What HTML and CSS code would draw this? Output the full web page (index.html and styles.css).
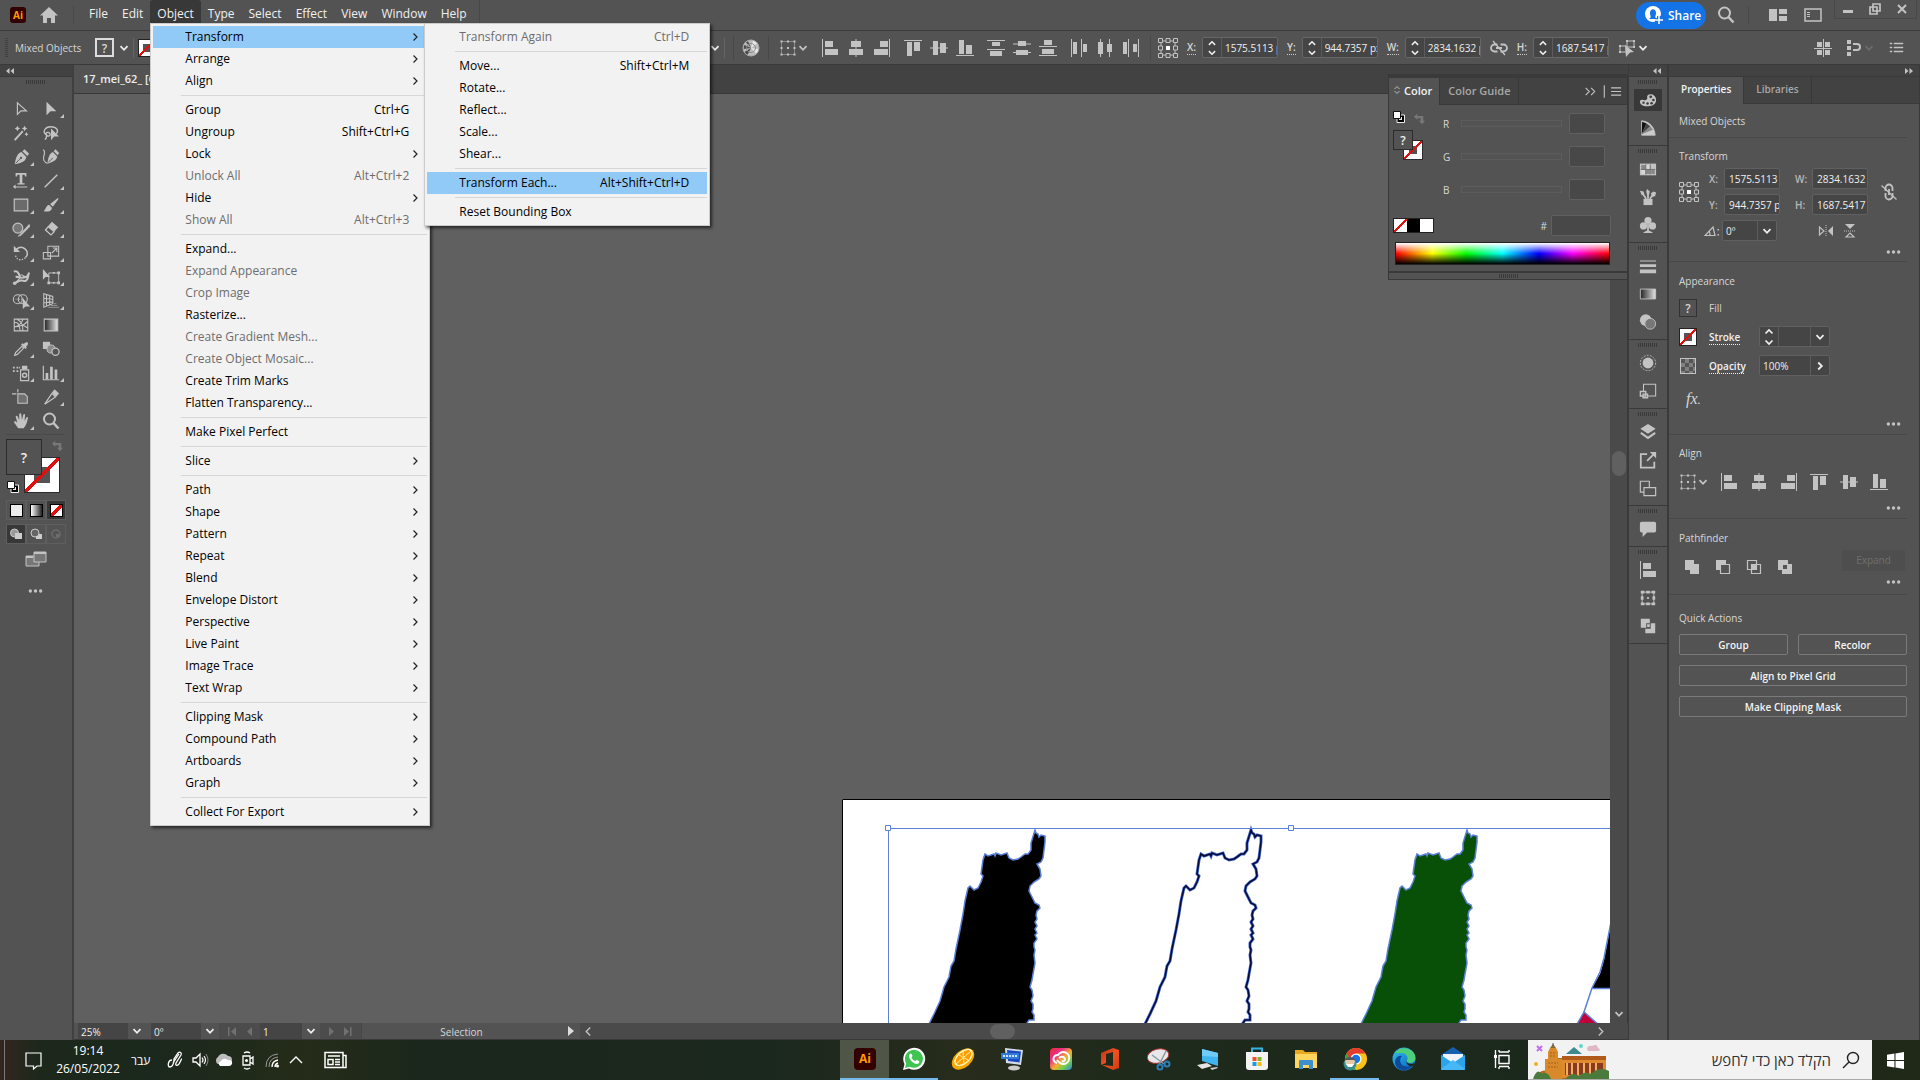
FILE: index.html
```html
<!DOCTYPE html>
<html lang="en">
<head>
    <meta charset="utf-8">
    <title>17_mei_62_</title>
    <link rel="stylesheet" href="styles.css">
</head>
<body>
    <!-- shared icons -->
    <svg class="sprite" aria-hidden="true">
        <defs>
            <linearGradient id="g-bw"><stop offset="0" stop-color="#222"/><stop offset="1" stop-color="#e6e6e6"/></linearGradient>
            <linearGradient id="g-cc" x2="1" y2="1"><stop offset="0" stop-color="#f02a2a"/><stop offset=".3" stop-color="#e8308c"/><stop offset=".55" stop-color="#f5b02e"/><stop offset=".75" stop-color="#6fd04c"/><stop offset="1" stop-color="#2f7df0"/></linearGradient>
            <linearGradient id="g-edge" x2="1" y2="1"><stop offset="0" stop-color="#39c3e0"/><stop offset=".5" stop-color="#1b8fd8"/><stop offset="1" stop-color="#1456a8"/></linearGradient>
            <linearGradient id="g-office" x2="1" y2="1"><stop offset="0" stop-color="#c2311b"/><stop offset=".5" stop-color="#f0501e"/><stop offset="1" stop-color="#d03a12"/></linearGradient>
        </defs>
        <symbol id="chev-r" viewBox="0 0 8 8"><path d="M2.5 .5 6 4 2.5 7.5" fill="none" stroke="currentColor" stroke-width="1.2"/></symbol>
        <symbol id="chev-d" viewBox="0 0 10 10"><path d="M1.5 3.2 5 6.8 8.5 3.2" fill="none" stroke="currentColor" stroke-width="1.8"/></symbol>
        <symbol id="spin" viewBox="0 0 10 18"><path d="M1.5 5.5 5 2l3.5 3.5M1.5 12.5 5 16l3.5-3.5" fill="none" stroke="currentColor" stroke-width="1.7"/></symbol>
        <symbol id="dbl-l" viewBox="0 0 10 8"><path d="M4.5 1v6L1 4zM9 1v6L5.5 4z" fill="currentColor"/></symbol>
        <symbol id="dbl-r" viewBox="0 0 10 8"><path d="M1 1v6l3.5-3zM5.5 1v6L9 4z" fill="currentColor"/></symbol>
        <symbol id="dots" viewBox="0 0 16 4"><g fill="currentColor"><circle cx="2.5" cy="2" r="1.8"/><circle cx="8" cy="2" r="1.8"/><circle cx="13.5" cy="2" r="1.8"/></g></symbol>
        <symbol id="swap" viewBox="0 0 14 14"><path d="M5 1 1 4.500 5 8V6h4v3H7l3.500 4L14 9h-2V3.500H5z" fill="#777"/></symbol>
        <symbol id="default" viewBox="0 0 12 12"><path d="M4 4h7.500v7.500H4z" fill="#000" stroke="#eee"/><path d="M6 6h3v3H6z" fill="#eee"/><path d="M.5 .5h7v7h-7z" fill="#fff" stroke="#111"/></symbol>

        <symbol id="al-l" viewBox="0 0 18 18"><path d="M1 0h1v18H1zM4 2h8v6H4zM4 10h13v6H4z" fill="currentColor"/></symbol>
        <symbol id="al-c" viewBox="0 0 18 18"><path d="M8.500 0h1v18h-1zM4 2h10v6H4zM2 10h14v6H2z" fill="currentColor"/></symbol>
        <symbol id="al-r" viewBox="0 0 18 18"><path d="M16 0h1v18h-1zM7 2h8v6H7zM1 10h14v6H1z" fill="currentColor"/></symbol>
        <symbol id="al-t" viewBox="0 0 18 18"><path d="M0 1h18v1H0zM3 3h5v14H3zM10 3h6v9h-6z" fill="currentColor"/></symbol>
        <symbol id="al-m" viewBox="0 0 18 18"><path d="M0 8.500h18v1H0zM3 2h5v14H3zM10 4h6v10h-6z" fill="currentColor"/></symbol>
        <symbol id="al-b" viewBox="0 0 18 18"><path d="M0 16h18v1H0zM3 1h5v14H3zM10 6h6v9h-6z" fill="currentColor"/></symbol>
        <symbol id="di-t" viewBox="0 0 18 18"><path d="M0 1h18v1H0zM5 3h8v4H5zM0 10h18v1H0zM3 12h12v5H3z" fill="currentColor"/></symbol>
        <symbol id="di-m" viewBox="0 0 18 18"><path d="M0 4.500h18v1H0zM5 2h8v5H5zM0 13h18v1H0zM3 11h12v5H3z" fill="currentColor"/></symbol>
        <symbol id="di-b" viewBox="0 0 18 18"><path d="M5 1h8v5H5zM0 7h18v1H0zM3 10h12v5H3zM0 16h18v1H0z" fill="currentColor"/></symbol>
        <symbol id="di-l" viewBox="0 0 18 18"><path d="M1 0h1v18H1zM3 3h4v12H3zM11 0h1v18h-1zM13 5h4v8h-4z" fill="currentColor"/></symbol>
        <symbol id="di-c" viewBox="0 0 18 18"><path d="M4 0h1v18H4zM2 3h5v12H2zM13 0h1v18h-1zM11 5h5v8h-5z" fill="currentColor"/></symbol>
        <symbol id="di-r" viewBox="0 0 18 18"><path d="M6 0h1v18H6zM1 3h4v12H1zM16 0h1v18h-1zM11 5h4v8h-4z" fill="currentColor"/></symbol>
        <symbol id="bounds" viewBox="0 0 18 18"><path d="M2.500 2.500h13v13h-13z" fill="none" stroke="currentColor" stroke-dasharray="1 1"/><path d="M1.500 1.500h2v2h-2zM8 1.500h2v2H8zM14.500 1.500h2v2h-2zM1.500 8h2v2h-2zM14.500 8h2v2h-2zM1.500 14.500h2v2h-2zM8 14.500h2v2H8zM14.500 14.500h2v2h-2zM8 8h2v2H8z" fill="currentColor"/></symbol>
        <symbol id="refpt" viewBox="0 0 20 20"><path d="M3 3h14v14H3z" fill="none" stroke="currentColor"/><g fill="#535353" stroke="currentColor"><path d="M.5 .5h4v4h-4zM8 .5h4v4H8zM15.500 .5h4v4h-4zM.5 8h4v4h-4zM15.500 8h4v4h-4zM.5 15.500h4v4h-4zM8 15.500h4v4H8zM15.500 15.500h4v4h-4z"/></g><path d="M8 8h4v4H8z" fill="#fff"/></symbol>
        <symbol id="link" viewBox="0 0 18 18"><g fill="none" stroke="currentColor" stroke-width="1.800"><path d="M7.500 5.500h-3a3.500 3.500 0 0 0 0 7h3M10.500 5.500h3a3.500 3.500 0 0 1 0 7h-3M6 9h6"/><path d="M3 2l12 14" stroke-width="1.300"/></g></symbol>
        <symbol id="link-v" viewBox="0 0 18 18"><g fill="none" stroke="currentColor" stroke-width="1.800"><path d="M5.500 8V5a3.500 3.500 0 0 1 7 0v3M5.500 10v3a3.500 3.500 0 0 0 7 0v-3M9 6v6"/><path d="M1.500 2.500l15 14" stroke-width="1.300"/></g></symbol>
        <symbol id="globe" viewBox="0 0 18 18"><circle cx="9" cy="9" r="8" fill="#bdbdbd"/><path d="M9 9 2.500 6a8 8 0 0 0-1 4zM9 9l-6.500 4a8 8 0 0 0 3 3zM9 9 6 2a8 8 0 0 0-2 1.500z" fill="#4a4a4a"/><path d="M9 9l2-7.500a8 8 0 0 1 4 3zM9 9l7.500 1a8 8 0 0 1-2 4.500z" fill="#e8e8e8"/><circle cx="9" cy="9" r="4.500" fill="none" stroke="#8a8a8a"/><circle cx="9" cy="9" r="8" fill="none" stroke="#aaa"/></symbol>
        <symbol id="lens" viewBox="0 0 18 18"><g fill="none" stroke="currentColor"><circle cx="7.500" cy="7" r="5.500" stroke-width="2"/><path d="M11.500 11l5 5.500" stroke-width="2.500"/></g></symbol>
        <symbol id="select-all" viewBox="0 0 20 20"><path d="M3 8h6v6H3zM10 3h7v6h-7z" fill="none" stroke="currentColor"/><path d="M2 7h2v2H2zM2 13h2v2H2zM9 2h2v2H9zM16 2h2v2h-2zM16 8h2v2h-2zM8 7l9 7-4 .5L9 19z" fill="currentColor"/></symbol>

        <symbol id="t-sel" viewBox="0 0 20 20"><path d="M6 3v13l4-4h6z" fill="none" stroke="currentColor" stroke-width="1.300"/></symbol>
        <symbol id="t-dir" viewBox="0 0 20 20"><path d="M5 2v15l4.500-4.500H16z" fill="currentColor"/></symbol>
        <symbol id="t-wand" viewBox="0 0 20 20"><path d="M3 18 12 8" stroke="currentColor" stroke-width="2.200"/><path d="M6 2l1 2 2 1-2 1-1 2-1-2-2-1 2-1zM14 2l1 2 2 1-2 1-1 2-1-2-2-1 2-1zM16 9l.8 1.500 1.500.8-1.500.8L16 14l-.8-2-1.500-.7 1.500-.8z" fill="currentColor"/></symbol>
        <symbol id="t-lasso" viewBox="0 0 20 20"><path d="M5 12C0 9 3 3 10 3c6 0 9 4 6 8M5 13c-2-4 3-5 4-2 .5 3-3 3-4 1zm0 0c0 3-1 4-2 4" fill="none" stroke="currentColor" stroke-width="1.500"/><path d="M10 5v13l3.500-4H19z" fill="currentColor"/></symbol>
        <symbol id="t-pen" viewBox="0 0 20 20"><path d="M11.500 3.500 17 9l2-2.500-5-5zM10.500 4.500 16 10c-1 5-5 6.500-13 8 1.500-8 3-12 7.500-13.500z" fill="currentColor"/><path d="M4 17l6-6" stroke="#535353"/><circle cx="10" cy="11" r="1.200" fill="#535353"/></symbol>
        <symbol id="t-curv" viewBox="0 0 20 20"><path d="M13 3.500 17.500 8l1.500-2.500-4-4zM12 4.500l5 5c-1 4-4 6-11 8 1-7 2-11 6-13z" fill="currentColor"/><path d="M7 16l5-5" stroke="#535353"/><path d="M1 2c3 1 2 4 1 7s0 7 4 8" fill="none" stroke="currentColor" stroke-width="1.300"/></symbol>
        <symbol id="t-type" viewBox="0 0 20 20"><path d="M4 1h12v4h-1.500l-.5-2h-2.500v9.500H14V14H6v-1.500h2.500V3H6l-.5 2H4zM2 16h15v1.300H2zM4 14v5l-3-2.500z" fill="currentColor"/></symbol>
        <symbol id="t-line" viewBox="0 0 20 20"><path d="M3 17 17 3" stroke="currentColor" stroke-width="1.600"/></symbol>
        <symbol id="t-rect" viewBox="0 0 20 20"><path d="M2.500 3.500h15v13h-15z" fill="#6b6b6b" stroke="currentColor" stroke-width="1.300"/></symbol>
        <symbol id="t-brush" viewBox="0 0 20 20"><path d="M18 2 9 9l3 3 6-8zM8 10c-3 0-3 3-6 7 4 1 9 0 9-4z" fill="currentColor"/></symbol>
        <symbol id="t-shaper" viewBox="0 0 20 20"><circle cx="6.500" cy="9" r="5.500" fill="#777" stroke="currentColor" stroke-width="1.300"/><path d="M9 16 19 5l1 2-10 10-3 1z" fill="currentColor" stroke="currentColor"/></symbol>
        <symbol id="t-eraser" viewBox="0 0 20 20"><path d="M11 2l7 6-8 9-7-6z" fill="currentColor"/><path d="M7 7.500l6.500 5.500L10 16.500 4 11z" fill="#535353" stroke="currentColor" stroke-width="1.300"/></symbol>
        <symbol id="t-rotate" viewBox="0 0 20 20"><path d="M5 6c5-5 12-1 12 5 0 2-1 3-2 4" fill="none" stroke="currentColor" stroke-width="1.700"/><path d="M4 13c1 5 7 6 11 2" fill="none" stroke="currentColor" stroke-width="1.500" stroke-dasharray="1.500 1.500"/><path d="M2 2v7h7z" fill="currentColor"/></symbol>
        <symbol id="t-scale" viewBox="0 0 20 20"><path d="M6.500 2.500h12v11h-12zM1.500 9.500h8v7h-8z" fill="none" stroke="currentColor" stroke-width="1.200"/><path d="M11 10l5-5M12 4.500h4.500V9" fill="none" stroke="currentColor" stroke-width="1.200"/></symbol>
        <symbol id="t-width" viewBox="0 0 20 20"><path d="M2 4c5-2 5 3 7 5M19 5c-1 5-4 6-7 4M4 10c4-1 6 3 14-1-1 6-4 6-7 5s-5 2-7 2" fill="none" stroke="currentColor" stroke-width="2.300"/><path d="M3 17l8-8" stroke="currentColor" stroke-width="1.200"/><circle cx="3" cy="17" r="2" fill="currentColor"/><circle cx="11" cy="9" r="1.500" fill="#535353" stroke="currentColor"/></symbol>
        <symbol id="t-free" viewBox="0 0 20 20"><path d="M7.500 5.500h11v11h-11z" fill="none" stroke="currentColor"/><path d="M1 1v12l3-3h5zM6 15h3v3H6zM17 15h3v3h-3zM17 4h3v3h-3zM12 15.500h2v2h-2zM12 4.500h2v2h-2z" fill="currentColor"/></symbol>
        <symbol id="t-build" viewBox="0 0 20 20"><circle cx="6.500" cy="8" r="5" fill="none" stroke="currentColor" stroke-width="1.200"/><circle cx="12" cy="8" r="5" fill="none" stroke="currentColor" stroke-width="1.200"/><path d="M4 8h10" stroke="currentColor" stroke-dasharray="1 1"/><path d="M12 7v12l3-3h5z" fill="currentColor"/></symbol>
        <symbol id="t-persp" viewBox="0 0 20 20"><path d="M2 2v15l10-4V5zM5 3v13M8.500 4v10.500M2 7l10 1M2 12l10-1" fill="none" stroke="currentColor" stroke-width="1.200"/><path d="M7 17h12M10 15h7M13 13h3" stroke="#999"/></symbol>
        <symbol id="t-mesh" viewBox="0 0 20 20"><path d="M2.500 3.500h15v13h-15zM3 7c5 0 5 4 6 9M3 12c5-1 10 0 14-6M6 4c6 3 6 7 6 12M12 4c-1 4-6 8-9 8M12 10l5 3" fill="none" stroke="currentColor" stroke-width="1.200"/></symbol>
        <symbol id="t-grad" viewBox="0 0 20 20"><path d="M2.500 3.500h15v13h-15z" fill="url(#g-bw)" stroke="currentColor" stroke-width="1.200"/></symbol>
        <symbol id="t-drop" viewBox="0 0 20 20"><path d="M3 17l1-3 7-7 2 2-7 7z" fill="none" stroke="currentColor" stroke-width="1.300"/><path d="M10 5l5 5 1.500-1.500-1-1C20 4 17 0 13 4.500l-1-1z" fill="currentColor"/></symbol>
        <symbol id="t-blend" viewBox="0 0 20 20"><path d="M1 2h8v8H1z" fill="currentColor"/><circle cx="10" cy="10" r="4.500" fill="#8a8a8a" stroke="currentColor"/><circle cx="15" cy="13" r="4" fill="#535353" stroke="currentColor" stroke-width="1.400"/></symbol>
        <symbol id="t-spray" viewBox="0 0 20 20"><path d="M9.500 6.500h9v12h-9z" fill="none" stroke="currentColor" stroke-width="1.300"/><path d="M11 2h6v4h-6zM1 3h2v2H1zM5 3h2v2H5zM1 7h2v2H1zM5 7h2v2H5zM8 3h1v2H8z" fill="currentColor"/><circle cx="14" cy="12.500" r="2.300" fill="none" stroke="currentColor" stroke-width="1.600"/></symbol>
        <symbol id="t-graph" viewBox="0 0 20 20"><path d="M1.500 2v15.500H19" fill="none" stroke="currentColor" stroke-width="1.300"/><path d="M4 10h3v7H4zM9 3h3v14H9zM14 6h3v11h-3z" fill="currentColor"/></symbol>
        <symbol id="t-board" viewBox="0 0 20 20"><path d="M6.500 6.500H14l3 3v7.500H6.500z" fill="#707070" stroke="currentColor" stroke-width="1.200"/><path d="M0 6.500h5M6.500 1v4" stroke="currentColor" stroke-width="1.200"/></symbol>
        <symbol id="t-slice" viewBox="0 0 20 20"><path d="M3 18 11 6l4 4z" fill="none" stroke="currentColor" stroke-width="1.400"/><path d="M11 5l3-3.500 5 4.500-3.500 4z" fill="currentColor"/></symbol>
        <symbol id="t-hand" viewBox="0 0 20 20"><path d="M7 18c-2-3-4-5-5-7 1-1 2-1 4 1L4 5c1-1 2-1 2.500.5L8 9l0-6.500c.5-1.500 2-1.500 2.300 0L11 9l1.500-6c.5-1 2-1 2 .5L14 10l2-4c1-1 2 0 1.700 1-.7 3-1.700 8-4.700 11z" fill="currentColor"/></symbol>

        <symbol id="d-palette" viewBox="0 0 20 20"><path d="M9 6c1-4 10-3 10 4 0 6-6 7-10 7-5 0-8-2-8-5 0-2 2-3 4-2 3 1 5-1 4-4z" fill="currentColor"/><g fill="#383838"><circle cx="13" cy="6.500" r="1.500"/><circle cx="16" cy="10" r="1.400"/><circle cx="14" cy="13.500" r="1.400"/><circle cx="9.500" cy="14" r="1.400"/><circle cx="5" cy="13" r="1.300"/></g></symbol>
        <symbol id="d-guide" viewBox="0 0 20 20"><path d="M3 2C12 3 17 9 18 18H3z" fill="#ccc" stroke="currentColor"/><path d="M3 17 3.500 3l5 2z" fill="#111"/><path d="M3 17 8.500 5l4 3z" fill="#444"/><path d="M3 17l9.500-9 3 4z" fill="#888"/></symbol>
        <symbol id="d-swatch" viewBox="0 0 20 20"><path d="M1 4h18v13H1z" fill="currentColor"/><path d="M2.500 5.500H7V10H2.500zM8 11h4v4.500H8zM13.500 11h4v4.500h-4z" fill="#888"/><path d="M8 5.500h4V10H8zM2.500 11H7v4.500H2.500z" fill="#eee" opacity=".5"/><path d="M2 10.500h16M7.500 5v11M12.500 5v11" stroke="#666"/></symbol>
        <symbol id="d-brushes" viewBox="0 0 20 20"><path d="M5 12h10v7H5z" fill="currentColor"/><path d="M8 12 4 6M10 12V6M12 12l4-5" stroke="currentColor" stroke-width="2"/><path d="M1 3l4 1 1 3-3 1zM9 1l3 3-1 4H9L8 4zM13 6l3-2 3 1-1 4-3 1z" fill="currentColor"/></symbol>
        <symbol id="d-club" viewBox="0 0 20 20"><g fill="currentColor"><circle cx="10" cy="5" r="4"/><circle cx="5" cy="11" r="4"/><circle cx="15" cy="11" r="4"/><path d="M9 7h2v9l4 2v1H5v-1l4-2z"/></g></symbol>
        <symbol id="d-stroke" viewBox="0 0 20 20"><path d="M1 4h18v1H1zM1 8h18v3H1zM1 14h18v4H1z" fill="currentColor"/></symbol>
        <symbol id="d-grad" viewBox="0 0 20 20"><path d="M1.500 4.500h17v11h-17z" fill="url(#g-bw)" stroke="currentColor"/></symbol>
        <symbol id="d-trans" viewBox="0 0 20 20"><circle cx="7.500" cy="8" r="6.500" fill="currentColor"/><circle cx="12.500" cy="12" r="6" fill="#777" stroke="currentColor"/></symbol>
        <symbol id="d-appear" viewBox="0 0 20 20"><circle cx="10" cy="10" r="6" fill="currentColor"/><circle cx="10" cy="10" r="8.500" fill="none" stroke="currentColor" stroke-dasharray="2 1.500"/></symbol>
        <symbol id="d-styles" viewBox="0 0 20 20"><path d="M5 3.500V2.500h13.500v13H10M5 3.500V10" fill="none" stroke="currentColor" stroke-width="1.200"/><path d="M1.500 10.500h6v5h-6zM4.500 13.500h5v4h-5z" fill="none" stroke="currentColor" stroke-width="1.500"/></symbol>
        <symbol id="d-layers" viewBox="0 0 20 20"><path d="M10 1l8.500 5.500L10 12 1.500 6.500z" fill="currentColor"/><path d="M2 11l8 5.500 8-5.500" fill="none" stroke="currentColor" stroke-width="2.400"/></symbol>
        <symbol id="d-export" viewBox="0 0 20 20"><path d="M9 3.500H2v15h15V12M9 11l8-8" fill="none" stroke="currentColor" stroke-width="2"/><path d="M12 1h7v7z" fill="currentColor"/></symbol>
        <symbol id="d-boards" viewBox="0 0 20 20"><path d="M1.500 2.500h10v12h-10z" fill="none" stroke="currentColor" stroke-width="1.300"/><path d="M5.500 9.500h13v9h-13z" fill="#535353" stroke="currentColor" stroke-width="1.300"/></symbol>
        <symbol id="d-chat" viewBox="0 0 20 20"><path d="M3 2h14q2 0 2 2v8q0 2-2 2H9l-5 5v-5H3q-2 0-2-2V4q0-2 2-2z" fill="currentColor"/></symbol>
        <symbol id="d-trf" viewBox="0 0 20 20"><path d="M3.500 3.500h13v13h-13z" fill="none" stroke="currentColor"/><path d="M2 2h4v3H2zM8 2h4v3H8zM14 2h4v3h-4zM2 8h3v4H2zM15 8h3v4h-3zM2 15h4v3H2zM8 15h4v3H8zM14 15h4v3h-4zM9 9h2v2H9z" fill="currentColor"/></symbol>
        <symbol id="d-path" viewBox="0 0 20 20"><path d="M2 2h10v5h-4v5H2zM13 7h5v11H7v-5h6zM9 8h3v3H9z" fill="currentColor"/></symbol>
        <symbol id="p-unite" viewBox="0 0 18 18"><path d="M2 2h9v4h5v10H7v-4H2z" fill="currentColor"/></symbol>
        <symbol id="p-minus" viewBox="0 0 18 18"><path d="M2 2h10v10H2z" fill="currentColor"/><path d="M6.500 6.500h9v9h-9z" fill="#535353" stroke="currentColor" stroke-width="1.200"/></symbol>
        <symbol id="p-inter" viewBox="0 0 18 18"><path d="M2.500 2.500h9v9h-9zM6.500 6.500h9v9h-9z" fill="none" stroke="currentColor" stroke-width="1.200"/><path d="M7 7h4v4H7z" fill="currentColor"/></symbol>
        <symbol id="p-excl" viewBox="0 0 18 18"><path d="M2 2h10v4h4v10H6v-4H2zM7 7v4h4V7z" fill="currentColor" fill-rule="evenodd"/></symbol>
    </svg>

    <header class="menubar">
        <svg class="app-logo" viewBox="0 0 16 16" role="img" aria-label="Ai"><rect width="16" height="16" rx="3" fill="#330000"/><text x="8" y="12" text-anchor="middle">Ai</text></svg>
        <button class="home" aria-label="Home"><svg viewBox="0 0 20 18"><path d="M10 1 1 9.500h3V17h4v-5h4v5h4V9.500h3z" fill="#c3c3c3"/></svg></button>
        <nav class="menus">
            <button>File</button>
            <button>Edit</button>
            <div class="menu-holder">
                <button class="open">Object</button>
                <div class="menu">
                    <div class="menu-holder">
                        <button class="active">Transform<svg><use href="#chev-r"/></svg></button>
                        <div class="menu submenu">
                            <button disabled>Transform Again<kbd>Ctrl+D</kbd></button>
                            <hr>
                            <button>Move...<kbd>Shift+Ctrl+M</kbd></button>
                            <button>Rotate...</button>
                            <button>Reflect...</button>
                            <button>Scale...</button>
                            <button>Shear...</button>
                            <hr>
                            <button class="active">Transform Each...<kbd>Alt+Shift+Ctrl+D</kbd></button>
                            <hr>
                            <button>Reset Bounding Box</button>
                        </div>
                    </div>
                    <button>Arrange<svg><use href="#chev-r"/></svg></button>
                    <button>Align<svg><use href="#chev-r"/></svg></button>
                    <hr>
                    <button>Group<kbd>Ctrl+G</kbd></button>
                    <button>Ungroup<kbd>Shift+Ctrl+G</kbd></button>
                    <button>Lock<svg><use href="#chev-r"/></svg></button>
                    <button disabled>Unlock All<kbd>Alt+Ctrl+2</kbd></button>
                    <button>Hide<svg><use href="#chev-r"/></svg></button>
                    <button disabled>Show All<kbd>Alt+Ctrl+3</kbd></button>
                    <hr>
                    <button>Expand...</button>
                    <button disabled>Expand Appearance</button>
                    <button disabled>Crop Image</button>
                    <button>Rasterize...</button>
                    <button disabled>Create Gradient Mesh...</button>
                    <button disabled>Create Object Mosaic...</button>
                    <button>Create Trim Marks</button>
                    <button>Flatten Transparency...</button>
                    <hr>
                    <button>Make Pixel Perfect</button>
                    <hr>
                    <button>Slice<svg><use href="#chev-r"/></svg></button>
                    <hr>
                    <button>Path<svg><use href="#chev-r"/></svg></button>
                    <button>Shape<svg><use href="#chev-r"/></svg></button>
                    <button>Pattern<svg><use href="#chev-r"/></svg></button>
                    <button>Repeat<svg><use href="#chev-r"/></svg></button>
                    <button>Blend<svg><use href="#chev-r"/></svg></button>
                    <button>Envelope Distort<svg><use href="#chev-r"/></svg></button>
                    <button>Perspective<svg><use href="#chev-r"/></svg></button>
                    <button>Live Paint<svg><use href="#chev-r"/></svg></button>
                    <button>Image Trace<svg><use href="#chev-r"/></svg></button>
                    <button>Text Wrap<svg><use href="#chev-r"/></svg></button>
                    <hr>
                    <button>Clipping Mask<svg><use href="#chev-r"/></svg></button>
                    <button>Compound Path<svg><use href="#chev-r"/></svg></button>
                    <button>Artboards<svg><use href="#chev-r"/></svg></button>
                    <button>Graph<svg><use href="#chev-r"/></svg></button>
                    <hr>
                    <button>Collect For Export<svg><use href="#chev-r"/></svg></button>
                </div>
            </div>
            <button>Type</button>
            <button>Select</button>
            <button>Effect</button>
            <button>View</button>
            <button>Window</button>
            <button>Help</button>
        </nav>
        <div class="menubar-right">
            <button class="share"><svg viewBox="0 0 20 20"><circle cx="9" cy="9" r="8" fill="#fff"/><path d="M5 14c3-2 1-3 1-6 0-5 6-5 6 0 0 3-2 4 1 6z" fill="#1473e6"/><path d="M11 15h8M15 11v8" stroke="#1473e6" stroke-width="4"/><path d="M11 15h8M15 11v8" stroke="#fff" stroke-width="1.500"/></svg>Share</button>
            <button class="find" aria-label="Search"><svg class="icon"><use href="#lens"/></svg></button>
            <button class="arrange" aria-label="Arrange documents"><svg viewBox="0 0 18 12"><path d="M0 0h8v12H0zM10 0h8v5h-8zM10 7h8v5h-8z" fill="#c3c3c3"/></svg></button>
            <button class="workspace" aria-label="Workspace"><svg viewBox="0 0 18 14"><path d="M1 1h16v12H1z" fill="none" stroke="#c3c3c3" stroke-width="1.500"/><path d="M3 4h3v1H3zM3 6h3v1H3zM3 8h3v1H3z" fill="#c3c3c3"/></svg></button>
            <div class="window-buttons">
                <button aria-label="Minimize"><svg viewBox="0 0 14 14"><path d="M2 8h10v3H2z" fill="#c3c3c3"/></svg></button>
                <button aria-label="Restore"><svg viewBox="0 0 14 14"><path d="M5 2h7v7H5zM2 5h7v7H2z" fill="none" stroke="#c3c3c3" stroke-width="1.700"/></svg></button>
                <button aria-label="Close"><svg viewBox="0 0 14 14"><path d="M3 3l8 8M11 3l-8 8" stroke="#c3c3c3" stroke-width="2"/></svg></button>
            </div>
        </div>
    </header>

    <section class="controlbar">
        <div class="control-start">
            <span class="grip-v"></span>
            <span class="kind">Mixed Objects</span>
            <button class="q-box">?</button>
            <button class="drop" aria-label="Fill options"><svg><use href="#chev-d"/></svg></button>
            <span class="none-swatch"></span>
        </div>
        <button class="drop" aria-label="Style options"><svg><use href="#chev-d"/></svg></button>
        <span class="vr"></span>
        <button aria-label="Recolor artwork"><svg class="icon"><use href="#globe"/></svg></button>
        <span class="vr"></span>
        <button class="align-to" aria-label="Align to"><svg class="icon"><use href="#bounds"/></svg><svg class="small"><use href="#chev-d"/></svg></button>
        <div class="aligns">
            <button aria-label="Align left"><svg class="icon"><use href="#al-l"/></svg></button>
            <button aria-label="Align center"><svg class="icon"><use href="#al-c"/></svg></button>
            <button aria-label="Align right"><svg class="icon"><use href="#al-r"/></svg></button>
        </div>
        <div class="aligns">
            <button aria-label="Align top"><svg class="icon"><use href="#al-t"/></svg></button>
            <button aria-label="Align middle"><svg class="icon"><use href="#al-m"/></svg></button>
            <button aria-label="Align bottom"><svg class="icon"><use href="#al-b"/></svg></button>
        </div>
        <div class="aligns">
            <button aria-label="Distribute top"><svg class="icon"><use href="#di-t"/></svg></button>
            <button aria-label="Distribute middle"><svg class="icon"><use href="#di-m"/></svg></button>
            <button aria-label="Distribute bottom"><svg class="icon"><use href="#di-b"/></svg></button>
        </div>
        <div class="aligns">
            <button aria-label="Distribute left"><svg class="icon"><use href="#di-l"/></svg></button>
            <button aria-label="Distribute center"><svg class="icon"><use href="#di-c"/></svg></button>
            <button aria-label="Distribute right"><svg class="icon"><use href="#di-r"/></svg></button>
        </div>
        <span class="vr last"></span>
        <button aria-label="Reference point"><svg class="ref"><use href="#refpt"/></svg></button>
        <label for="cx">X:</label>
        <span class="field"><svg><use href="#spin"/></svg><input id="cx" value="1575.5113 px"></span>
        <label for="cy">Y:</label>
        <span class="field"><svg><use href="#spin"/></svg><input id="cy" value="944.7357 px"></span>
        <label for="cw">W:</label>
        <span class="field"><svg><use href="#spin"/></svg><input id="cw" value="2834.1632 px"></span>
        <button class="linker" aria-label="Constrain"><svg class="icon"><use href="#link"/></svg></button>
        <label for="ch">H:</label>
        <span class="field"><svg><use href="#spin"/></svg><input id="ch" value="1687.5417 px"></span>
        <button class="isolate" aria-label="Select similar"><svg class="ref"><use href="#select-all"/></svg><svg class="small"><use href="#chev-d"/></svg></button>
        <div class="control-end">
            <button aria-label="Snap"><svg class="icon" viewBox="0 0 18 18"><path d="M3 3h5v5H3zM11 3h5v5h-5zM3 11h5v5H3zM11 11h5v5h-5zM9 0h1v18H9zM0 9h18v1H0z" fill="#c3c3c3"/></svg></button>
            <button class="align-to" aria-label="Glyph snap"><svg class="icon" viewBox="0 0 18 18"><path d="M2 1h4v4H2zM2 7h4v4H2zM2 13h4v4H2z" fill="#c3c3c3"/><path d="M8 5h4a3 3 0 0 1 0 6H8" fill="none" stroke="#c3c3c3" stroke-width="2"/></svg><svg class="small faint"><use href="#chev-d"/></svg></button>
            <button aria-label="Panel menu"><svg class="icon" viewBox="0 0 18 18"><path d="M3 4h2v1H3zM7 4h9v1H7zM3 8h2v1H3zM7 8h9v1H7zM3 12h2v1H3zM7 12h9v1H7z" fill="#c3c3c3" stroke="#c3c3c3" stroke-width=".5"/></svg></button>
        </div>
    </section>

    <main>
        <aside class="tools">
            <div class="collapse"><svg><use href="#dbl-l"/></svg></div>
            <span class="grip"></span>
            <div class="tool-grid">
                <button aria-label="Selection"><svg><use href="#t-sel"/></svg></button>
                <button class="more" aria-label="Direct selection"><svg><use href="#t-dir"/></svg></button>
                <button aria-label="Magic wand"><svg><use href="#t-wand"/></svg></button>
                <button aria-label="Lasso"><svg><use href="#t-lasso"/></svg></button>
                <button class="more" aria-label="Pen"><svg><use href="#t-pen"/></svg></button>
                <button aria-label="Curvature"><svg><use href="#t-curv"/></svg></button>
                <button class="more" aria-label="Type"><svg><use href="#t-type"/></svg></button>
                <button class="more" aria-label="Line"><svg><use href="#t-line"/></svg></button>
                <button class="more" aria-label="Rectangle"><svg><use href="#t-rect"/></svg></button>
                <button class="more" aria-label="Paintbrush"><svg><use href="#t-brush"/></svg></button>
                <button class="more" aria-label="Shaper"><svg><use href="#t-shaper"/></svg></button>
                <button class="more" aria-label="Eraser"><svg><use href="#t-eraser"/></svg></button>
                <button class="more" aria-label="Rotate"><svg><use href="#t-rotate"/></svg></button>
                <button class="more" aria-label="Scale"><svg><use href="#t-scale"/></svg></button>
                <button class="more" aria-label="Width"><svg><use href="#t-width"/></svg></button>
                <button class="more" aria-label="Free transform"><svg><use href="#t-free"/></svg></button>
                <button class="more" aria-label="Shape builder"><svg><use href="#t-build"/></svg></button>
                <button class="more" aria-label="Perspective grid"><svg><use href="#t-persp"/></svg></button>
                <button aria-label="Mesh"><svg><use href="#t-mesh"/></svg></button>
                <button aria-label="Gradient"><svg><use href="#t-grad"/></svg></button>
                <button class="more" aria-label="Eyedropper"><svg><use href="#t-drop"/></svg></button>
                <button aria-label="Blend"><svg><use href="#t-blend"/></svg></button>
                <button class="more" aria-label="Symbol sprayer"><svg><use href="#t-spray"/></svg></button>
                <button class="more" aria-label="Graph"><svg><use href="#t-graph"/></svg></button>
                <button aria-label="Artboard"><svg><use href="#t-board"/></svg></button>
                <button class="more" aria-label="Slice"><svg><use href="#t-slice"/></svg></button>
                <button class="more" aria-label="Hand"><svg><use href="#t-hand"/></svg></button>
                <button aria-label="Zoom"><svg><use href="#lens"/></svg></button>
            </div>
            <div class="paint">
                <span class="stroke-box"></span>
                <span class="fill-box">?</span>
                <svg class="swap"><use href="#swap"/></svg>
                <svg class="default"><use href="#default"/></svg>
            </div>
            <div class="modes">
                <button aria-label="Color"><span class="chip"></span></button>
                <button aria-label="Gradient"><span class="chip chip-grad"></span></button>
                <button class="on" aria-label="None"><span class="chip chip-none"></span></button>
            </div>
            <div class="modes">
                <button class="on" aria-label="Draw normal"><svg viewBox="0 0 12 12"><circle cx="4.500" cy="5" r="4" fill="#999" stroke="#ccc"/><path d="M5 5h7v6H5z" fill="#ccc"/></svg></button>
                <button aria-label="Draw behind"><svg viewBox="0 0 12 12"><path d="M6 6h6v5H6z" fill="#ccc"/><circle cx="5" cy="5" r="4" fill="#666" stroke="#ccc"/></svg></button>
                <button aria-label="Draw inside"><svg viewBox="0 0 12 12"><circle cx="6" cy="6" r="4" fill="none" stroke="#6c6c6c" stroke-width="1.500"/><path d="M6 6h3v3H6z" fill="#6c6c6c"/></svg></button>
            </div>
            <button class="screen" aria-label="Screen mode"><svg viewBox="0 0 22 16"><path d="M1 5h13v10H1z" fill="#777" stroke="#c3c3c3"/><path d="M9 1h12v10H9z" fill="#777" stroke="#c3c3c3"/><path d="M9 1h12v2H9zM1 5h7v2H1z" fill="#c3c3c3"/></svg></button>
            <button class="edit-tools" aria-label="Edit toolbar"><svg><use href="#dots"/></svg></button>
        </aside>

        <section class="document">
            <div class="doc-tabs"><span>17_mei_62_ [C</span></div>
            <div class="viewport">
                <div class="canvas">
                    <svg class="art" viewBox="842 799 768 224" role="img" aria-label="Artboard">
                        <defs>
                            <path id="map" d="M1035 830L1036 833 1038 834 1039 837 1041 835 1045 836 1045 842 1044 850 1043 858 1041 862 1037 864 1040 869 1041 876 1039 879 1034 882 1030 886 1029 891 1032 897 1035 903 1039 905 1040 908 1037 911 1036 915 1037 919 1035 922 1037 926 1035 929 1037 933 1035 935 1037 939 1034 943 1034 947 1035 950 1034 955 1035 963 1033 974 1032 980 1030 987 1032 990 1033 996 1031 1001 1033 1004 1033 1009 1032 1012 1034 1015 1034 1020 1029 1020 1025 1026 928 1026 934 1014 940 1001 944 987 949 977 951 966 954 961 956 949 960 930 963 914 965 901 968 888 970 886 974 890 978 888 981 882 983 876 981 874 983 860 985 854 988 856 994 854 995 856 996 853 1001 855 1007 853 1009 858 1013 860 1018 859 1021 857 1025 854 1028 854 1031 850 1031 843z"/>
                        </defs>
                        <path d="M842 799h769v225H842z" fill="#fff"/>
                        <path d="M842.500 1024V799.500H1610" fill="none" stroke="#000"/>
                        <g stroke="#5a80d8" stroke-width="1.500">
                            <use href="#map" fill="#000"/>
                            <g fill="none">
                                <use href="#map" x="216" stroke="#4a6fd0" stroke-width="3"/>
                                <use href="#map" x="216" stroke="#050a3c" stroke-width="1.600"/>
                            </g>
                            <use href="#map" x="432" fill="#085007"/>
                            <path d="M1612 918l-8 42-4 14-8 14h20z" fill="#000" stroke="none"/>
                            <path d="M1611 922l-7 36-4 14-8 16-8 24M1592 988.500h20" fill="none"/>
                            <path d="M1584 1012l-8 14h24z" fill="#c00038"/>
                        </g>
                        <path d="M888.500 1024V828.500H1610" fill="none" stroke="#5a80d8"/>
                        <path d="M885.500 825.500h5v5h-5zM1288.500 825.500h5v5h-5z" fill="#fff" stroke="#5a80d8"/>
                    </svg>
                </div>
                <div class="vscroll"><span class="thumb"></span><svg><use href="#chev-d"/></svg></div>
            </div>
            <footer class="status">
                <select aria-label="Zoom" class="w50"><option>25%</option></select><svg><use href="#chev-d"/></svg>
                <select aria-label="Rotate view" class="w50 second"><option>0º</option></select><svg><use href="#chev-d"/></svg>
                <span class="nav"><svg class="nav-icon" viewBox="0 0 40 16"><path d="M9 4h1.500v9H9zM17 4v9l-5-4.500zM33 4v9l-5-4.500z" fill="#707070"/></svg></span>
                <select aria-label="Artboard" class="w42"><option>1</option></select><svg><use href="#chev-d"/></svg>
                <span class="nav"><svg class="nav-icon" viewBox="0 0 40 16"><path d="M9 4v9l5-4.500zM24 4v9l5-4.500zM30 4h1.500v9H30z" fill="#707070"/></svg></span>
                <span class="mode">Selection</span>
                <span class="play"></span>
                <div class="hscroll"><svg class="flip"><use href="#chev-r"/></svg><span class="thumb"></span><svg><use href="#chev-r"/></svg></div>
            </footer>

            <div class="color-panel">
                <div class="panel-tabs">
                    <button class="on"><svg class="updown" viewBox="0 0 8 10"><path d="M1.500 4 4 1.500 6.500 4M1.500 6 4 8.500 6.500 6" fill="none" stroke="#bbb"/></svg>Color</button>
                    <button>Color Guide</button>
                    <span class="panel-icons"><svg viewBox="0 0 44 14"><path d="M4 3l4 4-4 4M10 3l4 4-4 4M32 3h11M32 7h11M32 11h11M24.500 0v14" fill="none" stroke="#c3c3c3" stroke-width="1.200"/></svg></span>
                </div>
                <div class="color-body">
                    <div class="mini-paint">
                        <svg class="default"><use href="#default"/></svg><svg class="swap"><use href="#swap"/></svg>
                        <span class="stroke-box"></span><span class="fill-box">?</span>
                    </div>
                    <div class="sliders">
                        <label for="r">R</label><span class="track"></span><input id="r">
                        <label for="g">G</label><span class="track"></span><input id="g">
                        <label for="b">B</label><span class="track"></span><input id="b">
                    </div>
                </div>
                <div class="hex-row">
                    <span class="chips"><i class="chip-none"></i><i class="black"></i><i class="white"></i></span>
                    <label for="hex">#</label><input id="hex">
                </div>
                <div class="spectrum"></div>
                <div class="panel-foot"><span class="grip"></span></div>
            </div>
        </section>

        <aside class="dock">
            <div class="collapse end"><svg><use href="#dbl-l"/></svg></div>
            <div class="dock-group"><button class="on" aria-label="Color"><svg><use href="#d-palette"/></svg></button><button aria-label="Color guide"><svg><use href="#d-guide"/></svg></button></div>
            <div class="dock-group"><button aria-label="Swatches"><svg><use href="#d-swatch"/></svg></button><button aria-label="Brushes"><svg><use href="#d-brushes"/></svg></button><button aria-label="Symbols"><svg><use href="#d-club"/></svg></button></div>
            <div class="dock-group"><button aria-label="Stroke"><svg><use href="#d-stroke"/></svg></button><button aria-label="Gradient"><svg><use href="#d-grad"/></svg></button><button aria-label="Transparency"><svg><use href="#d-trans"/></svg></button></div>
            <div class="dock-group"><button aria-label="Appearance"><svg><use href="#d-appear"/></svg></button><button aria-label="Graphic styles"><svg><use href="#d-styles"/></svg></button></div>
            <div class="dock-group"><button aria-label="Layers"><svg><use href="#d-layers"/></svg></button><button aria-label="Asset export"><svg><use href="#d-export"/></svg></button><button aria-label="Artboards"><svg><use href="#d-boards"/></svg></button></div>
            <div class="dock-group"><button aria-label="Comments"><svg><use href="#d-chat"/></svg></button></div>
            <div class="dock-group"><button aria-label="Align"><svg><use href="#al-l"/></svg></button><button aria-label="Transform"><svg><use href="#d-trf"/></svg></button><button aria-label="Pathfinder"><svg><use href="#d-path"/></svg></button></div>
        </aside>

        <aside class="properties">
            <div class="collapse end"><svg><use href="#dbl-r"/></svg></div>
            <div class="panel-tabs"><button class="on">Properties</button><button>Libraries</button></div>
            <section class="kind-row">Mixed Objects</section>
            <section class="transform">
                <h2>Transform</h2>
                <div class="xywh">
                    <svg class="ref"><use href="#refpt"/></svg>
                    <label for="px">X:</label><input id="px" value="1575.5113 px">
                    <label for="pw">W:</label><input id="pw" value="2834.1632 px">
                    <svg class="link"><use href="#link-v"/></svg>
                    <label for="py">Y:</label><input id="py" value="944.7357 px">
                    <label for="ph">H:</label><input id="ph" value="1687.5417 px">
                </div>
                <div class="angle">
                    <label for="rot"><svg viewBox="0 0 16 12" aria-label="Rotate"><path d="M1 10.500h10L9 2zM6 10c0-2 0-3-1-4" fill="none" stroke="#c3c3c3" stroke-width="1.200"/><path d="M13.500 4h1.500v1.500h-1.500zM13.500 9h1.500v1.500h-1.500z" fill="#c3c3c3"/></svg></label>
                    <span class="combo"><input id="rot" value="0º"><svg><use href="#chev-d"/></svg></span>
                    <button aria-label="Flip horizontal"><svg viewBox="0 0 16 14"><path d="M1.500 3v8L6 7z" fill="none" stroke="#c3c3c3" stroke-width="1.200"/><path d="M15 2v10L10 7z" fill="#c3c3c3"/><path d="M8 1v12" stroke="#c3c3c3" stroke-dasharray="1 1"/></svg></button>
                    <button aria-label="Flip vertical"><svg viewBox="0 0 16 14"><path d="M3 0h10L8 5z" fill="#c3c3c3"/><path d="M4 13h8L8 9z" fill="none" stroke="#c3c3c3" stroke-width="1.200"/><path d="M2 7h12" stroke="#c3c3c3" stroke-dasharray="1 1"/></svg></button>
                </div>
                <button class="dots" aria-label="More options"><svg><use href="#dots"/></svg></button>
            </section>
            <section class="appearance">
                <h2>Appearance</h2>
                <div class="row"><span class="q-box">?</span><span class="name">Fill</span></div>
                <div class="row"><span class="none-swatch"></span><label class="name" for="sw">Stroke</label><span class="combo"><svg class="spin"><use href="#spin"/></svg><input id="sw"><svg><use href="#chev-d"/></svg></span></div>
                <div class="row"><span class="checker"></span><label class="name" for="op">Opacity</label><span class="combo"><input id="op" value="100%"><svg class="right"><use href="#chev-d"/></svg></span></div>
                <button class="fx">fx<small>.</small></button>
                <button class="dots" aria-label="More options"><svg><use href="#dots"/></svg></button>
            </section>
            <section class="align">
                <h2>Align</h2>
                <div class="row">
                    <button class="align-to" aria-label="Align to"><svg class="icon"><use href="#bounds"/></svg><svg class="small"><use href="#chev-d"/></svg></button>
                    <button aria-label="Align left"><svg class="icon"><use href="#al-l"/></svg></button>
                    <button aria-label="Align center"><svg class="icon"><use href="#al-c"/></svg></button>
                    <button aria-label="Align right"><svg class="icon"><use href="#al-r"/></svg></button>
                    <button aria-label="Align top"><svg class="icon"><use href="#al-t"/></svg></button>
                    <button aria-label="Align middle"><svg class="icon"><use href="#al-m"/></svg></button>
                    <button aria-label="Align bottom"><svg class="icon"><use href="#al-b"/></svg></button>
                </div>
                <button class="dots" aria-label="More options"><svg><use href="#dots"/></svg></button>
            </section>
            <section class="pathfinder">
                <h2>Pathfinder</h2>
                <div class="row">
                    <button aria-label="Unite"><svg class="icon"><use href="#p-unite"/></svg></button>
                    <button aria-label="Minus front"><svg class="icon"><use href="#p-minus"/></svg></button>
                    <button aria-label="Intersect"><svg class="icon"><use href="#p-inter"/></svg></button>
                    <button aria-label="Exclude"><svg class="icon"><use href="#p-excl"/></svg></button>
                    <button class="expand" disabled>Expand</button>
                </div>
                <button class="dots" aria-label="More options"><svg><use href="#dots"/></svg></button>
            </section>
            <section class="quick">
                <h2>Quick Actions</h2>
                <div class="actions">
                    <button>Group</button><button>Recolor</button>
                    <button class="wide">Align to Pixel Grid</button>
                    <button class="wide">Make Clipping Mask</button>
                </div>
            </section>
        </aside>
    </main>

    <footer class="taskbar">
        <div class="tray">
            <button class="notify" aria-label="Notifications"><svg viewBox="0 0 20 20"><path d="M2 3h15v13h-4l-3.500 3V16H2z" fill="none" stroke="#fff" stroke-width="1.200"/></svg></button>
            <div class="clock"><span>19:14</span><span>26/05/2022</span></div>
            <span class="lang">עבר</span>
            <svg viewBox="0 0 20 20"><path d="M6 10c-4 0-5 7-2 7s4-5 4-8l4-6c2-2 4 0 3 2l-5 8c-1 3 1 3 3 1 2-3 2-5 3-5M7 13l6-9" fill="none" stroke="#fff" stroke-width="1.300"/></svg>
            <svg viewBox="0 0 20 20"><path d="M3 8h3l4-4v12l-4-4H3z" fill="none" stroke="#fff" stroke-width="1.300"/><path d="M12 7.500q2 2.500 0 5M14 6q3 4 0 8" fill="none" stroke="#fff" stroke-width="1.200"/><path d="M16 4q4 6 0 12" fill="none" stroke="#888"/></svg>
            <svg viewBox="0 0 20 20"><path d="M4 14a4 4 0 0 1 0-7 6 6 0 0 1 10-1 4 4 0 0 1 0 8z" fill="#bdbdbd"/><path d="M6 16q-3-3 1-5 3-4 7-1 5 0 4 4-1 2-3 2z" fill="#fff"/></svg>
            <svg viewBox="0 0 20 20"><path d="M5 6h7v9H5zM12 9l3-2v7l-3-2M6 3q3-2 6 0M6 18q3 2 6 0" fill="none" stroke="#fff" stroke-width="1.300"/><circle cx="8.500" cy="10.500" r="1.500" fill="#fff"/></svg>
            <svg viewBox="0 0 20 20"><g fill="none" stroke="#fff"><path d="M13 17q0-3 3-4M10 17q0-6 6-7" stroke-width="1.400"/><path d="M7 17Q7 8 16 7M4 17Q4 5 16 4" stroke="#999"/></g><circle cx="15.500" cy="16" r="1.500" fill="#fff"/></svg>
            <svg viewBox="0 0 20 20"><path d="M4 13l6-6 6 6" fill="none" stroke="#fff" stroke-width="1.400"/></svg>
            <svg class="news" viewBox="0 0 24 18"><path d="M2 1.500h18v15H2zM20 4.500h3v12h-3M5 8.500h5v5H5zM5 5h12M12 8.500h5M12 11h5M12 13.500h5" fill="none" stroke="#fff" stroke-width="1.500"/></svg>
        </div>
        <div class="apps">
            <a href="#" class="current" aria-label="Illustrator"><svg viewBox="0 0 24 24"><rect x="1" y="1" width="22" height="22" rx="4" fill="#330000"/><text x="12" y="16" text-anchor="middle" class="ai-text">Ai</text></svg></a>
            <a href="#" class="running" aria-label="WhatsApp"><svg viewBox="0 0 24 24"><path d="M1 23l1.500-6A11 11 0 1 1 7 21.500z" fill="#fff"/><path d="M3 21l1.200-4.500a9 9 0 1 1 3.500 3.300z" fill="#3fc351"/><path d="M8.500 6.500c-3 2-.5 6.500 2 8.500 3 2.500 6 2.500 7 0 .3-1-2.500-2.500-3-2l-1 1c-2-.5-3.500-2-4-3.500l1-1.500c0-.8-1-2.500-2-2.500z" fill="#fff"/></svg></a>
            <a href="#" aria-label="Citrio"><svg viewBox="0 0 24 24"><ellipse cx="12" cy="12" rx="13" ry="8.500" transform="rotate(-42 12 12)" fill="#f5a800"/><ellipse cx="12.500" cy="10.500" rx="11" ry="6.500" transform="rotate(-42 12.500 10.500)" fill="#fff6c0"/><ellipse cx="12.500" cy="10.500" rx="9.500" ry="5" transform="rotate(-42 12.500 10.500)" fill="#ff9c00"/><path d="M5 17 20 4M8 8l9 5M12 4l1 13" stroke="#fff0a0"/></svg></a>
            <a href="#" aria-label="Remote"><svg viewBox="0 0 24 24"><path d="M5 1l18 2-2 15-15-2z" fill="#d5dce8"/><path d="M7 3l14 1.500-1.500 11L8 14z" fill="#1a48c0"/><path d="M1 6h18v6H1z" fill="#2f7ad8"/><path d="M3 9h14" stroke="#cfe4ff" stroke-width="2" stroke-dasharray="2 1"/><ellipse cx="14" cy="21" rx="6" ry="2.500" fill="#ccc"/></svg></a>
            <a href="#" aria-label="Creative Cloud"><svg viewBox="0 0 24 24"><rect x="1" y="1" width="22" height="22" rx="4" fill="url(#g-cc)"/><path d="M8 16a4 4 0 1 1 1-8 6 6 0 1 1 5 9q-3 0-6-4M10 11q4-3 6 1 0 3-3 2" fill="none" stroke="#fff" stroke-width="2"/></svg></a>
            <a href="#" aria-label="Office"><svg viewBox="0 0 24 24"><path d="M3 6 15 1l6 2v18l-6 2L4 18l11 1V5L8 7v9l-5 2z" fill="url(#g-office)"/></svg></a>
            <a href="#" aria-label="Snipping Tool"><svg viewBox="0 0 24 24"><ellipse cx="11" cy="9" rx="11" ry="7" transform="rotate(-15 11 9)" fill="#e8e8e8" stroke="#a33"/><path d="M5 8l12 9M19 4l-7 14" stroke="#8a9aa8" stroke-width="1.500"/><circle cx="13" cy="20" r="2.500" fill="none" stroke="#2d7fb8" stroke-width="2"/><circle cx="20" cy="17" r="2.500" fill="none" stroke="#2d7fb8" stroke-width="2"/></svg></a>
            <a href="#" aria-label="This PC"><svg viewBox="0 0 24 24"><path d="M6 2l16 4v13L6 14z" fill="#3fb4f0"/><path d="M6 2l16 4v4L6 9z" fill="#6fcbf8"/><path d="M1 18l10-2 5 3-10 3z" fill="#e4e4e4"/><path d="M14 21l7-1 1 1-6 2z" fill="#ccc"/></svg></a>
            <a href="#" aria-label="Store"><svg viewBox="0 0 24 24"><path d="M7 6V1.500h10V6" fill="none" stroke="#36b4e5" stroke-width="2"/><path d="M1 5h22v15q0 3-3 3H4q-3 0-3-3z" fill="#f4f4f4"/><path d="M7.500 10h4v4h-4z" fill="#f0502a"/><path d="M12.500 10h4v4h-4z" fill="#7db928"/><path d="M7.500 15h4v4h-4z" fill="#1b9ae0"/><path d="M12.500 15h4v4h-4z" fill="#fdb813"/></svg></a>
            <a href="#" aria-label="File Explorer"><svg viewBox="0 0 24 24"><path d="M1 3h8l2 2h12v16H1z" fill="#e8a820"/><path d="M1 7h22v14H1z" fill="#ffd75e"/><path d="M5 22v-8q0-1 1-1h12q1 0 1 1v8h-4v-4H9v4z" fill="#3d8fd0"/></svg></a>
            <a href="#" class="running" aria-label="Chrome"><svg viewBox="0 0 24 24"><circle cx="13" cy="12" r="11" fill="#fbc116"/><path d="M3.500 6.500A11 11 0 0 1 22.500 6.500H13L8 15z" fill="#e33b2e"/><path d="M3.500 6.500 9 16l4 7A11 11 0 0 1 3.500 6.500z" fill="#2ba24c"/><circle cx="13" cy="12" r="5.500" fill="#fff"/><circle cx="13" cy="12" r="4.200" fill="#1a73e8"/><circle cx="7" cy="17" r="6.500" fill="#3a9090"/><path d="M2 14q5-6 10 0l-1 4H3z" fill="#e8c8a8"/><path d="M1 13q6-6 12 0z" fill="#555"/><path d="M3 17h8l-2 3H5z" fill="#fff"/></svg></a>
            <a href="#" aria-label="Edge"><svg viewBox="0 0 24 24"><circle cx="12" cy="12" r="11.500" fill="url(#g-edge)"/><path d="M3 6C8-2 23 0 23.500 11c0 6-8 6-9 3 3-4-1-8-5-8-3 0-5 0-6.500 0z" fill="#4fce7a"/><path d="M10 9c-5 6 1 14 11 9-5 7-16 7-18-2 0-5 3-8 7-7z" fill="#0c4a9c"/><path d="M14 14c1 3 6 4 9 2l-2 3q-6 1-7-5z" fill="#1c2719"/></svg></a>
            <a href="#" aria-label="Mail"><svg viewBox="0 0 24 24"><path d="M0 8 12 0l12 8v14H0z" fill="#1660b0"/><path d="M2 7h20v12H2z" fill="#eef4fa"/><path d="M0 8l12 8 12-8v14q0 1-1 1H1q-1 0-1-1z" fill="#2aa4ea"/><path d="M0 22 12 13l12 9-1 1H1z" fill="#45b8f5"/></svg></a>
            <a href="#" aria-label="Task View"><svg viewBox="0 0 24 24"><path d="M9 8.500h10v8H9zM9 5V3M19 5V3M9 5h10M9 20v2M19 20v2M9 19.500h10M5.500 3v18" fill="none" stroke="#fff" stroke-width="1.400"/><path d="M4 8h3v3H4z" fill="#fff"/></svg></a>
        </div>
        <label class="search" for="q">
            <svg class="doodle" viewBox="0 0 76 36" aria-hidden="true"><path d="M2 36q6-12 14-7v7zM20 36V17l2-2h12v21z" fill="#b7671c"/><path d="M12 36V16h3v-7l2-4h6l2 4v7h4v20z" fill="#d88a2a"/><path d="M17 5l3-4 3 4z" fill="#8a6a3a"/><path d="M17 10h6M17 13h6M15 20h10M15 24h10" stroke="#a8611a" stroke-dasharray="2 1"/><path d="M19.500 0h1v3h-1z" fill="#555"/><path d="M29 15h44v20H29z" fill="#e08a30"/><path d="M29 13h44v4H29z" fill="#b05a1c"/><path d="M33 11l8-7 8 7z" fill="#3c8a90"/><path d="M32 20h38v12H32z" fill="#8a3a20"/><path d="M34 20v12M39 20v12M45 20v12M51 20v12M57 20v12M63 20v12" stroke="#f0b060" stroke-width="2"/><path d="M0 36q4-12 9-5 5-4 9 5zM32 36q8-8 14-3 6-6 12-2 8-8 18-3v8z" fill="#4a7a3c"/><path d="M54 6q1-4 5-3 5-3 6 2 4 2 0 3H55z" fill="#e0b8c4"/><path d="M4 3l5 5M9 3 4 8" stroke="#c070f0" stroke-width="2"/><circle cx="48" cy="3" r="2" fill="#5cd8c8"/><circle cx="3" cy="21" r="2" fill="#f0b020"/></svg>
            <input id="q" dir="rtl" placeholder="הקלד כאן כדי לחפש">
            <svg class="lens" viewBox="0 0 18 18"><g fill="none" stroke="#222" stroke-width="1.400"><circle cx="11" cy="7" r="5.500"/><path d="M7 11l-6 6"/></g></svg>
        </label>
        <button class="start" aria-label="Start"><svg viewBox="0 0 16 16"><path d="M0 2.500 7 1.500v6H0zM8 1.300 16 0v7.500H8zM0 8.500h7v6l-7-1zM8 8.500h8V16l-8-1.300z" fill="#fff"/></svg></button>
    </footer>
</body>
</html>
```
FILE: styles.css
```css
* {
    box-sizing: border-box;
}
body {
    margin: 0;
    height: 100vh;
    display: flex;
    flex-direction: column;
    overflow: hidden;
    background: #535353;
    color: #d6d6d6;
    font-family: "Open Sans", "Noto Sans", sans-serif;
    font-size: 10px;
}
button, input, select {
    font: inherit;
    color: inherit;
    margin: 0;
    padding: 0;
    border: 0;
    background: none;
    border-radius: 0;
}
svg {
    display: block;
    color: #c3c3c3;
    flex: none;
}
.sprite {
    position: absolute;
    width: 0;
    height: 0;
}
.icon {
    width: 18px;
    height: 18px;
}
.ref {
    width: 20px;
    height: 20px;
}
.small {
    width: 10px;
    height: 10px;
}
.faint {
    color: #6c6c6c;
}

/* menu bar */
.menubar {
    height: 31px;
    flex: none;
    display: flex;
    align-items: center;
    padding-left: 10px;
    border-bottom: 1px solid #3a3a3a;
}
.app-logo {
    width: 16px;
    height: 16px;
}
.app-logo text {
    fill: #ff9a00;
    font-size: 10px;
    font-weight: bold;
}
.home {
    margin-left: 13px;
    padding-right: 14px;
    border-right: 1px solid #484848;
}
.home svg {
    width: 20px;
    height: 18px;
}
.menus {
    display: flex;
    height: 23px;
    align-self: flex-end;
    margin: 0 0 7px 8px;
    font-size: 12px;
    color: #f0f0f0;
}
.menus > button, .open {
    padding: 4px 7px 0;
    height: 23px;
}
.menus > button:last-child {
    padding-right: 12px;
    border-right: 1px solid #484848;
}
.open {
    background: #383838;
    border-radius: 3px 3px 0 0;
}
.menu-holder {
    position: relative;
}
.menu {
    position: absolute;
    z-index: 10;
    top: 23px;
    left: 0;
    width: 280px;
    padding: 2px;
    background: #f2f2f2;
    border: 1px solid #ccc;
    box-shadow: 2px 2px 3px rgba(0, 0, 0, 0.6);
    color: #000;
}
.menu button {
    display: flex;
    align-items: center;
    justify-content: space-between;
    width: 100%;
    height: 22px;
    padding: 0 18px 0 32px;
    font-size: 12px;
    line-height: 22px;
}
.menu button svg {
    width: 8px;
    height: 8px;
    color: #222;
    margin-right: -10px;
}
.menu button:disabled {
    color: #6d6d6d;
}
.menu .active {
    background: #91c9f7;
}
.menu hr {
    height: 1px;
    margin: 3px 0 3px 28px;
    border: 0;
    background: #d7d7d7;
}
.menu kbd {
    font-family: inherit;
}
.submenu {
    top: -3px;
    left: 271px;
    width: 286px;
}
.menubar-right {
    display: flex;
    align-items: center;
    height: 30px;
    margin-left: auto;
}
.share {
    display: flex;
    align-items: center;
    gap: 4px;
    width: 70px;
    height: 27px;
    padding-left: 8px;
    border-radius: 14px;
    background: #1473e6;
    color: #fff;
    font-size: 12px;
    font-weight: 600;
}
.share svg {
    width: 20px;
    height: 20px;
}
.find {
    padding: 0 13px 0 11px;
    border-right: 1px solid #484848;
}
.arrange {
    margin-left: 20px;
}
.arrange svg {
    width: 18px;
    height: 12px;
}
.workspace {
    margin: 0 12px 0 17px;
}
.workspace svg {
    width: 18px;
    height: 14px;
}
.window-buttons {
    display: flex;
    align-self: flex-start;
    height: 19px;
    margin-right: 3px;
    border: 1px solid #484848;
    border-top: 0;
}
.window-buttons button {
    width: 27px;
    padding-left: 6px;
}
.window-buttons svg {
    width: 14px;
    height: 14px;
}

/* control bar */
.controlbar {
    height: 34px;
    flex: none;
    display: flex;
    align-items: center;
    border-bottom: 1px solid #3a3a3a;
}
.control-start {
    display: flex;
    align-items: center;
    width: 705px;
    flex: none;
}
.grip-v {
    width: 3px;
    height: 20px;
    margin: 0 7px 0 5px;
    background: repeating-linear-gradient(#404040 0 1px, transparent 1px 2px);
}
.kind {
    width: 80px;
}
.q-box {
    display: grid;
    place-items: center;
    width: 19px;
    height: 19px;
    border: 2px solid #ddd;
    font-size: 12px;
    font-weight: 600;
}
.drop {
    display: grid;
    place-items: center;
    width: 20px;
    height: 20px;
    border-right: 1px solid #666;
    color: #eee;
}
.drop svg, .combo svg, .status > svg {
    width: 10px;
    height: 10px;
    color: #eee;
}
.none-swatch, .chip-none {
    background: linear-gradient(to bottom right, #fff 44%, #e01010 44% 56%, #fff 56%);
}
.none-swatch {
    width: 18px;
    height: 18px;
    margin-left: 4px;
    border: 1px solid #222;
}
.none-swatch, .appearance .none-swatch {
    background: linear-gradient(to bottom right, transparent 45%, #e01010 45% 55%, transparent 55%), linear-gradient(#535353, #535353) center / 8px 8px no-repeat, #fff;
}
.controlbar .vr {
    width: 1px;
    height: 24px;
    margin: 0 8px;
    background: #484848;
}
.align-to, .isolate {
    display: flex;
    align-items: center;
    gap: 1px;
}
.controlbar > .align-to {
    margin-left: 2px;
}
.aligns {
    display: flex;
    gap: 8px;
    margin-left: 13px;
}
.controlbar .last {
    margin: 0 7px 0 10px;
}
.controlbar label {
    font-weight: 600;
    border-bottom: 1px dotted #ccc;
    line-height: 13px;
    margin: 0 6px 0 9px;
}
.field {
    display: flex;
    align-items: center;
    height: 21px;
    width: 76px;
    border: 1px solid #666;
    border-radius: 2px;
    background: #454545;
}
.field svg {
    width: 18px;
    height: 16px;
    color: #eee;
}
.field input {
    width: 56px;
    height: 19px;
    padding-left: 3px;
    color: #f0f0f0;
    border-left: 1px solid #5c5c5c;
}
.linker {
    margin-left: 9px;
}
.isolate {
    margin-left: 8px;
}
.isolate .small {
    color: #eee;
}
.control-end {
    display: flex;
    align-items: center;
    gap: 13px;
    margin: 0 15px 0 auto;
}

/* workspace */
main {
    flex: 1;
    min-height: 0;
    display: flex;
}
.collapse {
    height: 12px;
    background: #424242;
    border-bottom: 1px solid #3a3a3a;
    padding: 2px 5px;
}
.collapse svg {
    width: 10px;
    height: 8px;
}
.collapse.end svg {
    margin-left: auto;
}
.grip {
    display: block;
    width: 19px;
    height: 4px;
    background: repeating-linear-gradient(to right, #3a3a3a 0 1px, transparent 1px 2px);
}
.tools {
    width: 74px;
    flex: none;
    border-right: 2px solid #404040;
}
.tools > .grip {
    margin: 3px auto 13px 26px;
}
.tool-grid {
    display: grid;
    grid-template-columns: 30px 30px;
    grid-auto-rows: 24px;
    margin: 0 6px;
    padding-bottom: 1px;
}
.tool-grid button {
    position: relative;
    display: grid;
    place-items: center;
}
.tool-grid svg {
    width: 18px;
    height: 18px;
}
.more::after {
    content: "";
    position: absolute;
    right: 2px;
    bottom: 3px;
    border: 2px solid transparent;
    border-right-color: #c3c3c3;
    border-bottom-color: #c3c3c3;
}
.paint {
    position: relative;
    height: 64px;
    margin: 0 8px 0 6px;
    border-top: 1px solid #4a4a4a;
}
.fill-box {
    position: absolute;
    left: 0;
    top: 4px;
    width: 36px;
    height: 36px;
    display: grid;
    place-items: center;
    background: #535353;
    border: 1px solid #2c2c2c;
    color: #eee;
    font-size: 14px;
    font-weight: 600;
}
.stroke-box {
    position: absolute;
    left: 18px;
    top: 22px;
    width: 36px;
    height: 36px;
    border: 1px solid #2c2c2c;
    background: linear-gradient(to bottom right, transparent 47%, #e01010 47% 53%, transparent 53%), linear-gradient(#535353, #535353) center / 16px 16px no-repeat, #fff;
}
.paint .swap {
    position: absolute;
    right: 1px;
    top: 5px;
    width: 12px;
    height: 12px;
}
.paint .default {
    position: absolute;
    left: 1px;
    top: 46px;
    width: 12px;
    height: 12px;
}
.modes {
    display: flex;
    margin: 2px 0 4px 6px;
}
.modes button {
    display: grid;
    place-items: center;
    width: 20px;
    height: 20px;
    border: 1px solid #5e5e5e;
}
.modes .on {
    background: #383838;
}
.modes svg {
    width: 12px;
    height: 12px;
}
.chip {
    width: 13px;
    height: 13px;
    border: 1px solid #000;
    background: #eee;
}
.chip-grad {
    background: linear-gradient(to right, #fff, #222);
}
.chip.chip-none {
    background: linear-gradient(to bottom right, #fff 38%, #e01010 38% 60%, #fff 60%);
}
.screen {
    display: block;
    margin: 7px 0 0 25px;
}
.screen svg {
    width: 22px;
    height: 16px;
}
.edit-tools {
    display: block;
    margin: 22px 0 0 28px;
}
.edit-tools svg, .dots svg {
    width: 15px;
    height: 4px;
}

/* document */
.document {
    position: relative;
    flex: 1;
    min-width: 0;
    display: flex;
    flex-direction: column;
}
.doc-tabs {
    height: 29px;
    flex: none;
    background: #424242;
    border-bottom: 1px solid #383838;
}
.doc-tabs span {
    display: inline-block;
    height: 28px;
    padding: 0 9px;
    background: #535353;
    color: #eee;
    font-size: 11px;
    font-weight: 600;
    line-height: 28px;
}
.viewport {
    flex: 1;
    min-height: 0;
    display: flex;
}
.canvas {
    flex: 1;
    position: relative;
    background: #606060;
}
.art {
    position: absolute;
    right: 0;
    bottom: 0;
    width: 768px;
    height: 224px;
}
.vscroll {
    width: 18px;
    display: flex;
    flex-direction: column;
    align-items: center;
    justify-content: space-between;
    background: #4a4a4a;
    border-right: 1px solid #3a3a3a;
    padding: 357px 0 4px;
}
.vscroll .thumb {
    width: 14px;
    height: 25px;
    border-radius: 7px;
    background: #606060;
}
.vscroll svg {
    width: 10px;
    height: 10px;
}
.status {
    height: 17px;
    flex: none;
    display: flex;
    align-items: center;
    padding-left: 4px;
    background: #535353;
    border-bottom: 1px solid #3a3a3a;
}
.status select {
    appearance: none;
    height: 16px;
    padding: 2px 0 0 3px;
    background: #454545;
    color: #eee;
}
.w50 {
    width: 50px;
}
.w42 {
    width: 42px;
}
.second {
    margin-left: 5px;
}
.status > svg {
    margin: 0 4px;
}
.nav {
    width: 41px;
    background: #4c4c4c;
}
.nav-icon {
    width: 40px;
    height: 16px;
}
.mode {
    width: 200px;
    height: 16px;
    padding-top: 2px;
    border-left: 1px solid #484848;
    text-align: center;
    line-height: 14px;
}
.play {
    width: 6px;
    height: 10px;
    margin-left: 7px;
    border: 5px solid transparent;
    border-left: 6px solid #ddd;
    border-right-width: 0;
}
.hscroll {
    flex: 1;
    height: 16px;
    margin-left: 6px;
    padding: 0 23px 0 4px;
    display: flex;
    align-items: center;
    justify-content: space-between;
    background: #4a4a4a;
}
.hscroll svg {
    width: 9px;
    height: 9px;
}
.hscroll .thumb {
    width: 25px;
    height: 15px;
    margin-right: 184px;
    border-radius: 8px;
    background: #606060;
}
.flip {
    transform: scaleX(-1);
}

/* floating color panel */
.color-panel {
    position: absolute;
    top: 9px;
    right: 0;
    width: 240px;
    background: #535353;
    border: 1px solid #383838;
    border-top: 4px solid #3a3a3a;
}
.panel-tabs {
    display: flex;
    height: 27px;
    background: #424242;
    border-bottom: 1px solid #3a3a3a;
}
.panel-tabs button {
    height: 27px;
    padding: 0 10px 3px;
    border-right: 1px solid #383838;
    color: #a8a8a8;
    font-size: 11px;
    font-weight: 600;
}
.panel-tabs .on {
    background: #535353;
    color: #f4f4f4;
}
.properties .panel-tabs button {
    font-size: 10px;
    padding: 0 12px 3px;
}
.color-panel .panel-tabs button {
    padding: 0 7px 3px 8px;
}
.color-panel .panel-tabs .on {
    display: flex;
    align-items: center;
    gap: 3px;
    padding-left: 4px;
}
.updown {
    width: 8px;
    height: 10px;
}
.panel-icons {
    margin: 7px 5px 0 auto;
}
.panel-icons svg {
    width: 40px;
    height: 13px;
}
.color-body {
    display: flex;
    gap: 18px;
    padding: 8px 22px 0 4px;
}
.mini-paint {
    position: relative;
    width: 32px;
    height: 60px;
}
.mini-paint svg {
    position: absolute;
    top: -2px;
    width: 12px;
    height: 12px;
}
.mini-paint .swap {
    left: 20px;
    top: 0;
}
.mini-paint .fill-box {
    top: 17px;
    width: 20px;
    height: 20px;
    font-size: 12px;
}
.mini-paint .stroke-box {
    left: 10px;
    top: 27px;
    width: 20px;
    height: 20px;
    background-size: auto, 8px 8px, auto;
}
.sliders {
    flex: 1;
    display: grid;
    grid-template-columns: 18px 1fr 36px;
    row-gap: 12px;
    align-items: center;
}
.track {
    height: 7px;
    margin-right: 7px;
    border: 1px solid #5c5c5c;
}
.sliders input, .hex-row input {
    width: 100%;
    height: 21px;
    border: 1px solid #606060;
    border-radius: 2px;
    background: #484848;
}
.hex-row {
    display: flex;
    align-items: center;
    padding: 15px 16px 0 4px;
}
.hex-row label {
    margin-left: auto;
}
.hex-row input {
    width: 60px;
    margin-left: 4px;
}
.chips {
    display: flex;
    border: 1px solid #222;
}
.chips i {
    width: 13px;
    height: 13px;
}
.black {
    background: #000;
}
.white {
    background: #fff;
}
.spectrum {
    height: 23px;
    margin: 6px 17px 6px 6px;
    border: 1px solid #222;
    background: linear-gradient(#fff, transparent 50%, #000), linear-gradient(to right, red, #ff0 17%, #0f0 33%, #0ff 50%, #00f 67%, #f0f 83%, #f00);
}
.panel-foot {
    height: 8px;
    border-top: 2px solid #3a3a3a;
}
.panel-foot .grip {
    margin: 1px auto 0;
}

/* icon dock */
.dock {
    width: 41px;
    flex: none;
    border-right: 2px solid #3a3a3a;
    border-left: 1px solid #3a3a3a;
}
.dock-group {
    display: flex;
    flex-direction: column;
    align-items: center;
    padding: 9px 0 3px;
    border-bottom: 1px solid #3a3a3a;
    background: repeating-linear-gradient(to right, #3a3a3a 0 1px, transparent 1px 2px) 9px 3px / 20px 4px no-repeat;
}
.dock button {
    display: grid;
    place-items: center;
    width: 28px;
    height: 22px;
    margin: 3px 0;
}
.dock button svg {
    width: 18px;
    height: 18px;
}
.dock .on {
    background: #383838;
}

/* properties */
.properties {
    width: 251px;
    flex: none;
    border-right: 1px solid #3a3a3a;
}
.properties section {
    width: 238px;
    padding: 0 0 0 10px;
    border-bottom: 1px solid #484848;
}
.properties h2 {
    margin: 0;
    font-size: 10px;
    font-weight: 400;
    line-height: 16px;
}
.properties .kind-row {
    height: 34px;
    line-height: 34px;
}
.properties label {
    color: #b8b8b8;
    font-weight: 600;
}
.properties .transform {
    height: 124px;
    padding-top: 10px;
}
.xywh {
    display: grid;
    grid-template-columns: 30px 15px 56px 32px 56px 1fr;
    row-gap: 5px;
    align-items: center;
    margin-top: 4px;
}
.xywh .ref, .xywh .link {
    grid-row: span 2;
}
.xywh .link {
    width: 18px;
    height: 18px;
    margin-left: 12px;
}
.xywh label[for="pw"], .xywh label[for="ph"] {
    padding-left: 15px;
}
.xywh input {
    width: 56px;
    height: 21px;
    padding-left: 4px;
    border: 1px solid #606060;
    border-radius: 2px;
    background: #454545;
    color: #f0f0f0;
}
.combo {
    display: flex;
    align-items: center;
    height: 21px;
    border: 1px solid #606060;
    border-radius: 2px;
    background: #454545;
}
.combo input {
    width: 51px;
    height: 19px;
    padding-left: 3px;
    border-right: 1px solid #5c5c5c;
    color: #f0f0f0;
}
.combo svg {
    margin: 0 4px;
}
.angle {
    display: flex;
    align-items: center;
    margin: 5px 0 0 25px;
}
.angle label svg {
    width: 16px;
    height: 12px;
    margin-right: 2px;
}
.angle input {
    width: 35px;
}
.angle button {
    margin-left: 8px;
}
.angle .combo + button {
    margin-left: 41px;
}
.angle button svg {
    width: 16px;
    height: 14px;
}
.dots {
    display: block;
    margin: 9px 6px 0 auto;
}
.properties .appearance {
    height: 173px;
    padding-top: 11px;
}
.properties .row {
    display: flex;
    align-items: center;
}
.appearance .row {
    height: 21px;
    margin-top: 8px;
}
.appearance .q-box, .appearance .none-swatch {
    width: 18px;
    height: 18px;
    margin: 0;
}
.appearance .q-box {
    border: 1px solid #333;
}
.checker {
    width: 16px;
    height: 16px;
    margin: 0 1px;
    border: 1px solid #c3c3c3;
    background: repeating-conic-gradient(#808080 0 25%, #555 0 50%) 0 0 / 8px 8px;
}
.name {
    margin-left: 12px;
}
.properties label.name {
    width: 50px;
    color: #f0f0f0;
    text-decoration: underline dotted;
    text-underline-offset: 3px;
    line-height: 14px;
}
.combo .spin {
    height: 18px;
}
.combo .spin + input {
    width: 33px;
    border-left: 1px solid #5c5c5c;
}
.combo .right {
    transform: rotate(-90deg);
}
.fx {
    display: block;
    margin: 14px 0 0 7px;
    font-family: "Liberation Serif", serif;
    font-size: 16px;
    line-height: 18px;
    font-style: italic;
}
.appearance .dots {
    margin-top: 13px;
}
.properties .align {
    height: 84px;
    padding-top: 10px;
}
.align .row {
    gap: 12px;
    margin-top: 12px;
}
.align .dots {
    margin-top: 15px;
}
.properties .pathfinder {
    height: 76px;
    padding-top: 11px;
}
.pathfinder .row {
    gap: 13px;
    height: 22px;
    padding-left: 4px;
    margin-top: 3px;
}
.pathfinder .row .icon {
    margin-top: 14px;
}
.expand {
    width: 63px;
    height: 21px;
    margin: 0 2px 0 auto;
    background: #4e4e4e;
    color: #6e6e6e;
}
.pathfinder .dots {
    margin-top: 9px;
}
.properties .quick {
    padding-top: 15px;
    border-bottom: 0;
}
.actions {
    display: grid;
    grid-template-columns: 1fr 1fr;
    gap: 10px;
    margin-top: 8px;
}
.actions button {
    height: 21px;
    border: 1px solid #7a7a7a;
    border-radius: 2px;
    color: #f4f4f4;
    font-weight: 600;
}
.wide {
    grid-column: span 2;
}

/* taskbar */
.taskbar {
    height: 40px;
    flex: none;
    display: flex;
    align-items: center;
    background: linear-gradient(to right, #33261f, #1d281b 2%, #1b281d 8%, #252c19 16%, #1b271c 22%, #1b281e 40%, #272c1c 50%, #1e2a1b 60%, #1b281c 80%, #202818);
    color: #fff;
}
.tray {
    display: flex;
    align-items: center;
    gap: 4px;
    padding-left: 19px;
    margin-left: 4px;
    height: 40px;
    border-left: 1px solid #777;
    font-size: 12px;
}
.tray svg {
    width: 20px;
    height: 20px;
}
.tray .news {
    width: 24px;
    height: 18px;
    margin-left: 13px;
}
.clock {
    display: flex;
    flex-direction: column;
    align-items: center;
    width: 70px;
    margin-left: 5px;
    gap: 2px;
    line-height: 16px;
}
.lang {
    width: 28px;
    margin: 0 3px 0 4px;
}
.apps {
    display: flex;
    margin: 0 2px 0 auto;
}
.apps a {
    display: grid;
    place-items: center;
    width: 49px;
    height: 40px;
    border-bottom: 2px solid transparent;
}
.apps svg {
    width: 24px;
    height: 24px;
}
.apps .current {
    background: #4f5647;
    border-bottom-color: #76b9ed;
}
.apps .running {
    border-bottom-color: #76b9ed;
}
.ai-text {
    fill: #ff9a00;
    font-size: 12px;
    font-weight: bold;
}
.search {
    display: flex;
    align-items: center;
    width: 344px;
    height: 40px;
    padding: 0 12px 0 5px;
    background: #f2f2f2;
    border-bottom: 1px solid #aaa;
}
.doodle {
    width: 76px;
    height: 36px;
    align-self: flex-end;
}
.search input {
    flex: 1;
    min-width: 0;
    height: 38px;
    padding: 0 11px;
    font-size: 15px;
}
.search input::placeholder {
    color: #333;
    opacity: 1;
}
.lens {
    width: 18px;
    height: 18px;
}
.start {
    width: 48px;
    height: 40px;
    padding-left: 15px;
}
.start svg {
    width: 17px;
    height: 17px;
}
```
